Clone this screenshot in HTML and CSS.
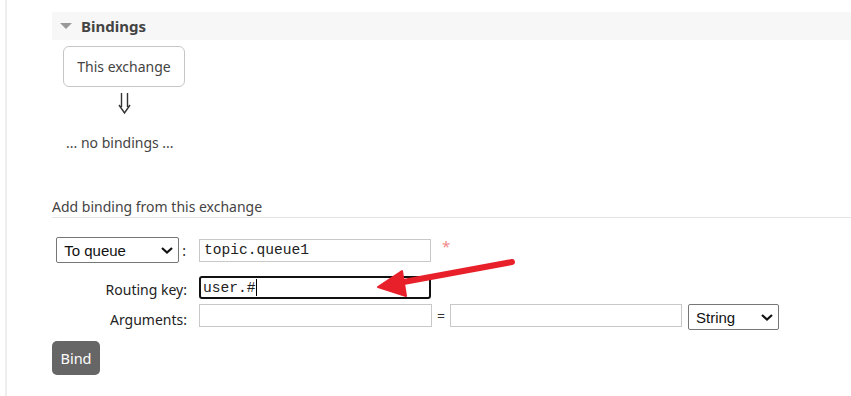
FILE: index.html
```html
<!DOCTYPE html>
<html lang="en">

<head>
    <meta charset="UTF-8">
    <title>Exchange bindings</title>
    <link rel="stylesheet" href="styles.css">
</head>

<body>

    <div class="page">
        <div class="section-title">
            <span class="triangle"></span>
            <h2>Bindings</h2>
        </div>

        <div class="exchange-box">This exchange</div>
        <div class="down-arrow">
            <svg viewBox="0 0 13 21" width="13" height="21"><path d="M3.5 0 V14 M9.5 0 V14 M1 12 L6.5 20 L12 12" fill="none" stroke="#333" stroke-width="1.4"/></svg>
        </div>
        <p class="no-bindings">... no bindings ...</p>

        <h3 class="form-title">Add binding from this exchange</h3>

        <form class="bind-form">
            <div class="row row-dest">
                <div class="row-label">
                    <span class="select-wrap wide">
                        <select>
                            <option>To queue</option>
                            <option>To exchange</option>
                        </select>
                        <svg class="chevron" viewBox="0 0 12 7" width="12" height="7"><path d="M1 1 L6 5.5 L11 1" fill="none" stroke="#111" stroke-width="2.2"/></svg>
                    </span>
                    <span class="colon">:</span>
                </div>
                <input type="text" class="mono" value="topic.queue1">
                <span class="required">*</span>
            </div>

            <div class="row row-key">
                <label class="row-label">Routing key:</label>
                <div class="fake-focus mono">user.#<span class="caret"></span></div>
            </div>

            <div class="row row-args">
                <label class="row-label">Arguments:</label>
                <input type="text">
                <span class="equals">=</span>
                <input type="text">
                <span class="select-wrap narrow">
                    <select>
                        <option>String</option>
                        <option>Number</option>
                        <option>List</option>
                    </select>
                    <svg class="chevron" viewBox="0 0 12 7" width="12" height="7"><path d="M1 1 L6 5.5 L11 1" fill="none" stroke="#111" stroke-width="2.2"/></svg>
                </span>
            </div>

            <button type="submit">Bind</button>
        </form>

        <!-- annotation arrow drawn over the form -->
        <svg class="annotation" width="851" height="396" viewBox="0 0 851 396">
            <line x1="512" y1="262" x2="398" y2="283" stroke="#e8202a" stroke-width="6" stroke-linecap="round"/>
            <polygon points="378,287 402,271 406,296" fill="#e8202a" stroke="#e8202a" stroke-width="2" stroke-linejoin="round"/>
        </svg>
    </div>

</body>

</html>
```

FILE: styles.css
```css
body {
    margin: 0;
    font-family: 'Noto Sans', 'Open Sans', sans-serif;
    font-size: 14px;
    color: #333;
    background-color: #fff;
    overflow: hidden;
}

.page {
    margin-left: 5px;
    border-left: 2px solid #eee;
    min-height: 100vh;
    padding: 12px 0 0 45px;
    box-sizing: border-box;
}

.section-title {
    height: 28px;
    background-color: #f7f7f7;
    display: flex;
    align-items: center;
    padding-left: 8px;
}

.triangle {
    width: 0;
    height: 0;
    border-left: 6px solid transparent;
    border-right: 6px solid transparent;
    border-top: 6px solid #999;
    margin-right: 9px;
}

.section-title h2 {
    margin: 0;
    font-size: 15px;
    font-weight: bold;
    color: #444;
}

.exchange-box {
    margin: 6px 0 0 11px;
    width: 120px;
    height: 39px;
    border: 1px solid #c6c6c6;
    border-radius: 6px;
    display: flex;
    align-items: center;
    justify-content: center;
    color: #444;
}

.down-arrow {
    margin: 6px 0 0 11px;
    width: 122px;
    height: 21px;
    display: flex;
    justify-content: center;
}

.no-bindings {
    margin: 19px 0 0 14px;
    line-height: 20px;
    color: #444;
}

.form-title {
    margin: 44px 0 0 0;
    font-size: 14px;
    font-weight: normal;
    color: #444;
    line-height: 20px;
    padding-bottom: 0;
    border-bottom: 1px solid #e4e4e4;
}

.bind-form {
    margin: 0;
}

.row {
    display: flex;
    align-items: center;
}

.row-label {
    width: 135px;
    margin-right: 12px;
    display: flex;
    justify-content: flex-end;
    align-items: center;
    color: #222;
}

.row-dest {
    margin-top: 19px;
    height: 26px;
}

.row-key {
    margin-top: 13px;
    height: 23px;
}

.row-key .row-label {
    padding-top: 4px;
}

.row-args {
    margin-top: 3px;
    height: 26px;
}

.row-args .row-label {
    padding-top: 8px;
}

.colon {
    margin-left: 3px;
    margin-right: 1px;
}

.select-wrap {
    position: relative;
    display: inline-block;
}

.select-wrap select {
    appearance: none;
    -webkit-appearance: none;
    font-family: 'Liberation Sans', Arial, sans-serif;
    font-size: 15px;
    color: #111;
    background-color: #fff;
    border: 1px solid #767676;
    border-radius: 2px;
    height: 26px;
    padding: 0 0 0 7px;
    box-sizing: border-box;
    display: block;
}

.select-wrap.wide select {
    width: 123px;
}

.select-wrap.narrow select {
    width: 91px;
}

.chevron {
    position: absolute;
    right: 6px;
    top: 10px;
    pointer-events: none;
}

.bind-form input {
    width: 232px;
    height: 23px;
    box-sizing: border-box;
    border: 1px solid #c8c8c8;
    border-radius: 0;
    padding: 0 4px;
    margin: 0;
}

.mono,
.bind-form input.mono {
    font-family: 'Liberation Mono', 'Courier New', monospace;
    font-size: 14.6px;
    color: #222;
}

.required {
    color: #f48a8a;
    margin-left: 11px;
    align-self: flex-start;
    font-size: 15px;
    line-height: 16px;
    margin-top: 1px;
}

.fake-focus {
    width: 232px;
    height: 23px;
    box-sizing: border-box;
    border: 2px solid #111;
    border-radius: 3px;
    padding: 0 2px;
    display: flex;
    align-items: center;
}

.caret {
    display: inline-block;
    width: 1px;
    height: 17px;
    background-color: #000;
}

.row-args input:first-of-type {
    width: 233px;
}

.equals {
    margin: 0 4px 0 4px;
    width: 10px;
    text-align: center;
    color: #333;
}

.row-args .select-wrap {
    margin-left: 6px;
    margin-top: 4px;
}

.bind-form button {
    margin-top: 13px;
    width: 48px;
    height: 34px;
    background-color: #666;
    color: #fff;
    border: none;
    border-radius: 5px;
    font-family: 'Noto Sans', sans-serif;
    font-size: 14.5px;
    padding: 0;
    cursor: pointer;
}

.annotation {
    position: absolute;
    left: 0;
    top: 0;
    pointer-events: none;
}
```
